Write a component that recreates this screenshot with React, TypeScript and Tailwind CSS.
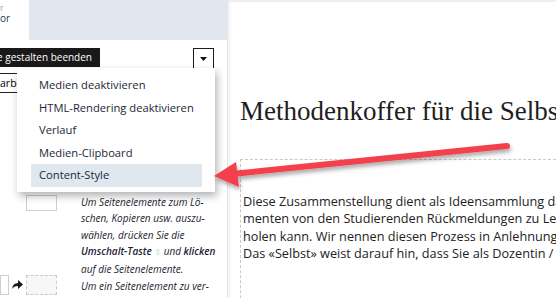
import React from 'react';

const menuItems = [
  'Medien deaktivieren',
  'HTML-Rendering deaktivieren',
  'Verlauf',
  'Medien-Clipboard',
  'Content-Style',
];

const Caret: React.FC = () => (
  <svg width="7" height="4" viewBox="0 0 7 4">
    <path d="M0 0h7L3.5 4z" fill="#111" />
  </svg>
);

const Arrow: React.FC = () => (
  <svg className="absolute left-0 top-0 pointer-events-none" width="556" height="298" viewBox="0 0 556 298">
    <defs>
      <filter id="sh" x="-10%" y="-50%" width="120%" height="200%">
        <feDropShadow dx="1" dy="3" stdDeviation="2" floodColor="#000" floodOpacity="0.35" />
      </filter>
    </defs>
    <g filter="url(#sh)">
      <line x1="507" y1="146" x2="232" y2="174" stroke="#f2414d" strokeWidth="6" strokeLinecap="round" />
      <path d="M214 176 L236 162 L239 187 Z" fill="#f2414d" />
    </g>
  </svg>
);

export default function App() {
  return (
    <div className="relative w-[556px] h-[298px] overflow-hidden bg-white flex" style={{ fontFamily: '"Open Sans", sans-serif' }}>
      {/* left sidebar */}
      <div className="w-[228px] shrink-0 h-[298px] overflow-hidden border-r border-[#e4e4e4] shadow-[2px_0_3px_rgba(0,0,0,0.06)]">
        <div className="flex h-[40px]">
          <div className="w-[29px] text-[9px] leading-[10px] pt-[3px] overflow-hidden">
            <div className="text-[#aaa]">r</div>
            <div className="text-[#2a3a55] text-[10px]">or</div>
          </div>
          <div className="flex-1 bg-[#e1e7ef]" />
        </div>

        <div className="flex items-start justify-between mt-[8px] pr-[13px] h-[21px]">
          <div className="w-[100px] h-[19px] bg-[#191919] text-white text-[10px] leading-[19px] flex justify-end overflow-hidden whitespace-nowrap pr-[8px]">
            Seite gestalten beenden
          </div>
          <div className="w-[21px] h-[21px] border-[1.5px] border-[#1a1a1a] flex items-center justify-center">
            <Caret />
          </div>
        </div>

        <div className="mt-[4px] w-[70px] h-[20px] border-y border-r border-[#222] text-[10.5px] leading-[18px] overflow-hidden whitespace-nowrap">
          arbeiten
        </div>

        <div className="flex mt-[102px] h-[80px]">
          <div className="ml-[26px] w-[31px] h-[16px] border border-[#cfcfcf] shrink-0" />
          <p className="ml-[24px] text-[10px] leading-[16.3px] italic text-[#1c2331] -mt-[1px] whitespace-nowrap">
            Um Seitenelemente zum Lö-<br />
            schen, Kopieren usw. auszu-<br />
            wählen, drücken Sie die<br />
            <span className="font-semibold">Umschalt-Taste</span> <span className="text-[#c8c8c8] not-italic text-[8px]" style={{ fontFamily: '"DejaVu Sans", sans-serif' }}>⇧</span> und <span className="font-semibold">klicken</span><br />
            auf die Seitenelemente.
          </p>
        </div>

        <div className="flex items-start h-[25px]">
          <div className="w-[9px] h-[20px] border border-[#cfcfcf] shrink-0" />
          <svg className="ml-[3px] mt-[5px] shrink-0" width="11" height="9" viewBox="0 0 11 9">
            <path d="M6 0 L11 4.5 L6 9 V6 C3 6 1.5 7 0 9 C0.5 5 2.5 3 6 3 Z" fill="#1a1a1a" />
          </svg>
          <div className="ml-[3px] w-[31px] h-[20px] shrink-0 border border-dashed border-[#c9c9c9] bg-[#f7f7f7]" />
          <p className="ml-[24px] text-[10px] leading-[16px] italic text-[#1c2331] mt-[3px] whitespace-nowrap">Um ein Seitenelement zu ver-</p>
        </div>
      </div>

      {/* content */}
      <div className="flex-1 border-t-2 border-[#eeeeee] pl-[12px] overflow-hidden">
        <h1 className="mt-[92px] text-[27px] leading-[34px] text-[#1e1e1e] whitespace-nowrap" style={{ fontFamily: '"Liberation Serif", serif' }}>
          Methodenkoffer für die Selbstevaluation
        </h1>
        <div className="mt-[31px] h-[200px] border-t border-l border-dashed border-[#c8c8c8] pl-[2px] pt-[33px]">
          <p className="text-[12.7px] leading-[17.3px] text-[#222] whitespace-nowrap">
            Diese Zusammenstellung dient als Ideensammlung dafür, wie man<br />
            menten von den Studierenden Rückmeldungen zu Lehrveranstaltungen<br />
            holen kann. Wir nennen diesen Prozess in Anlehnung an<br />
            Das «Selbst» weist darauf hin, dass Sie als Dozentin / Dozent
          </p>
        </div>
      </div>

      {/* dropdown menu */}
      <div className="absolute left-[17px] top-[68px] w-[198px] bg-white shadow-[2px_4px_8px_rgba(0,0,0,0.3)] pt-[6px] pb-[5px] pl-[14px] pr-[13px]">
        {menuItems.map((item, i) => (
          <div
            key={item}
            className={`h-[22.5px] px-[8px] text-[11.2px] leading-[22.5px] text-[#1d2638] whitespace-nowrap ${i === 4 ? 'bg-[#e1e7ef]' : ''}`}
          >
            {item}
          </div>
        ))}
      </div>

      <Arrow />
    </div>
  );
}
